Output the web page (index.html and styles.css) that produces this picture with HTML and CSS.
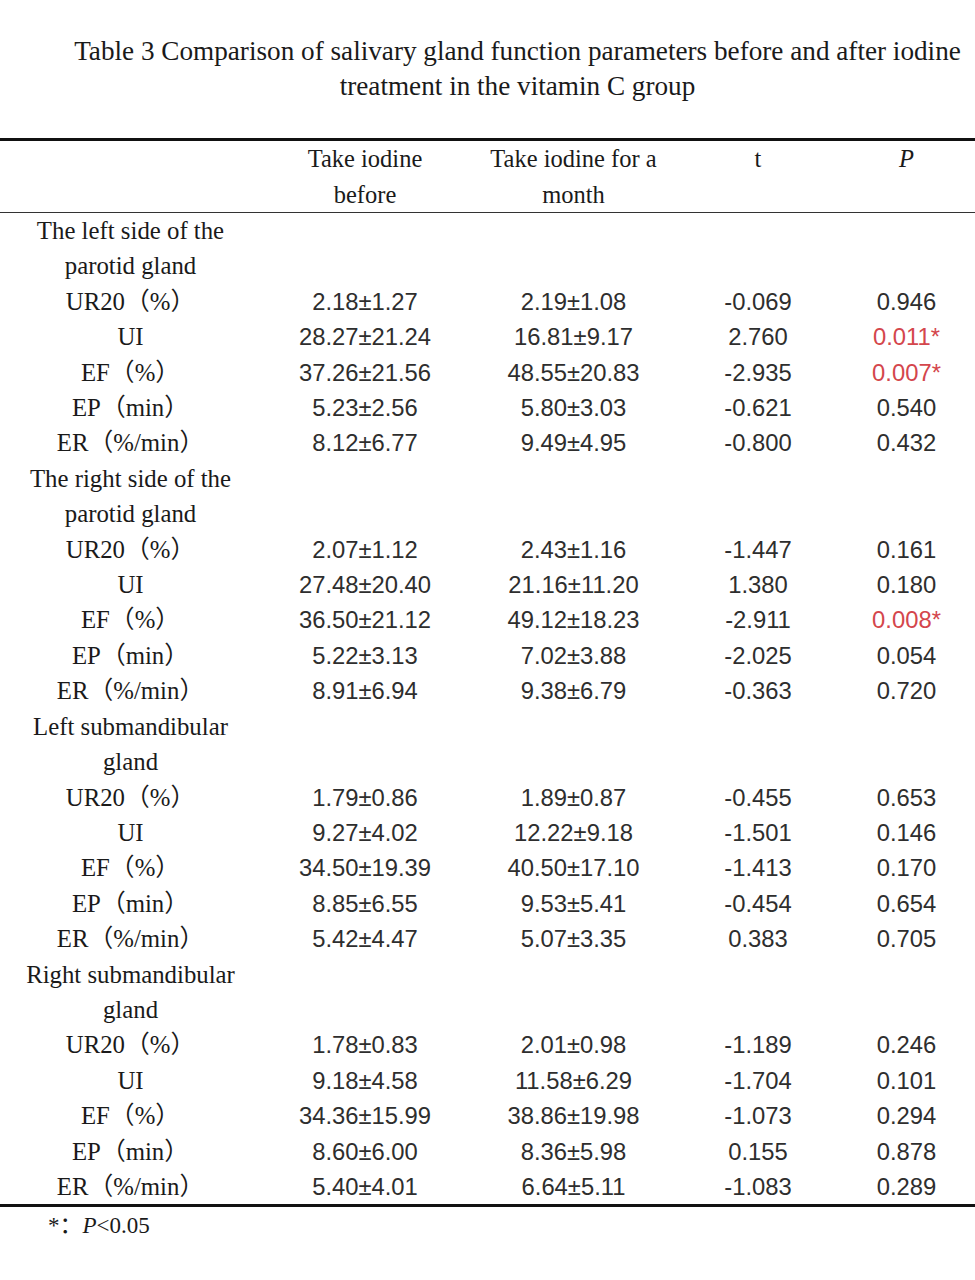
FILE: index.html
```html
<!DOCTYPE html>
<html lang="en">
<head>
<meta charset="utf-8">
<title>Table 3</title>
<link rel="stylesheet" href="styles.css">
</head>
<body>
<div class="page">
  <h1 class="title">Table 3 Comparison of salivary gland function parameters before and after iodine treatment in the vitamin C group</h1>
  <table class="data">
    <colgroup>
      <col class="c1"><col class="c2"><col class="c3"><col class="c4"><col class="c5">
    </colgroup>
    <thead>
      <tr>
        <th></th>
        <th class="h-wrap">Take iodine before</th>
        <th class="h-wide">Take iodine for a month</th>
        <th class="h-plain">t</th>
        <th class="h-plain"><i>P</i></th>
      </tr>
    </thead>
    <tbody>
      <tr class="group"><td>The left side of the parotid gland</td><td></td><td></td><td></td><td></td></tr>
      <tr><td>UR20（%）</td><td class="n">2.18±1.27</td><td class="n">2.19±1.08</td><td class="n">-0.069</td><td class="n">0.946</td></tr>
      <tr><td>UI</td><td class="n">28.27±21.24</td><td class="n">16.81±9.17</td><td class="n">2.760</td><td class="n sig">0.011*</td></tr>
      <tr><td>EF（%）</td><td class="n">37.26±21.56</td><td class="n">48.55±20.83</td><td class="n">-2.935</td><td class="n sig">0.007*</td></tr>
      <tr><td>EP（min）</td><td class="n">5.23±2.56</td><td class="n">5.80±3.03</td><td class="n">-0.621</td><td class="n">0.540</td></tr>
      <tr><td>ER（%/min）</td><td class="n">8.12±6.77</td><td class="n">9.49±4.95</td><td class="n">-0.800</td><td class="n">0.432</td></tr>

      <tr class="group"><td>The right side of the parotid gland</td><td></td><td></td><td></td><td></td></tr>
      <tr><td>UR20（%）</td><td class="n">2.07±1.12</td><td class="n">2.43±1.16</td><td class="n">-1.447</td><td class="n">0.161</td></tr>
      <tr><td>UI</td><td class="n">27.48±20.40</td><td class="n">21.16±11.20</td><td class="n">1.380</td><td class="n">0.180</td></tr>
      <tr><td>EF（%）</td><td class="n">36.50±21.12</td><td class="n">49.12±18.23</td><td class="n">-2.911</td><td class="n sig">0.008*</td></tr>
      <tr><td>EP（min）</td><td class="n">5.22±3.13</td><td class="n">7.02±3.88</td><td class="n">-2.025</td><td class="n">0.054</td></tr>
      <tr><td>ER（%/min）</td><td class="n">8.91±6.94</td><td class="n">9.38±6.79</td><td class="n">-0.363</td><td class="n">0.720</td></tr>

      <tr class="group"><td>Left submandibular gland</td><td></td><td></td><td></td><td></td></tr>
      <tr><td>UR20（%）</td><td class="n">1.79±0.86</td><td class="n">1.89±0.87</td><td class="n">-0.455</td><td class="n">0.653</td></tr>
      <tr><td>UI</td><td class="n">9.27±4.02</td><td class="n">12.22±9.18</td><td class="n">-1.501</td><td class="n">0.146</td></tr>
      <tr><td>EF（%）</td><td class="n">34.50±19.39</td><td class="n">40.50±17.10</td><td class="n">-1.413</td><td class="n">0.170</td></tr>
      <tr><td>EP（min）</td><td class="n">8.85±6.55</td><td class="n">9.53±5.41</td><td class="n">-0.454</td><td class="n">0.654</td></tr>
      <tr><td>ER（%/min）</td><td class="n">5.42±4.47</td><td class="n">5.07±3.35</td><td class="n">0.383</td><td class="n">0.705</td></tr>

      <tr class="group"><td>Right submandibular gland</td><td></td><td></td><td></td><td></td></tr>
      <tr><td>UR20（%）</td><td class="n">1.78±0.83</td><td class="n">2.01±0.98</td><td class="n">-1.189</td><td class="n">0.246</td></tr>
      <tr><td>UI</td><td class="n">9.18±4.58</td><td class="n">11.58±6.29</td><td class="n">-1.704</td><td class="n">0.101</td></tr>
      <tr><td>EF（%）</td><td class="n">34.36±15.99</td><td class="n">38.86±19.98</td><td class="n">-1.073</td><td class="n">0.294</td></tr>
      <tr><td>EP（min）</td><td class="n">8.60±6.00</td><td class="n">8.36±5.98</td><td class="n">0.155</td><td class="n">0.878</td></tr>
      <tr><td>ER（%/min）</td><td class="n">5.40±4.01</td><td class="n">6.64±5.11</td><td class="n">-1.083</td><td class="n">0.289</td></tr>
    </tbody>
  </table>
  <p class="note">*：<i>P</i>&lt;0.05</p>
</div>
</body>
</html>
```

FILE: styles.css
```css
html, body {
  margin: 0;
  padding: 0;
  background: #ffffff;
}

.page {
  width: 975px;
  padding-top: 34px;
  font-family: "Liberation Serif", "Noto Sans CJK SC", serif;
  color: #1a1a1a;
}

.title {
  margin: 0 0 34px 0;
  padding: 0 0 0 60px;
  font-weight: normal;
  font-size: 27.2px;
  line-height: 35px;
  text-align: center;
  color: #1a1a1a;
}

.data {
  width: 975px;
  border-collapse: collapse;
  table-layout: fixed;
  border-top: 3px solid #111;
  border-bottom: 3px solid #111;
}

.c1 { width: 261px; }
.c2 { width: 208px; }
.c3 { width: 209px; }
.c4 { width: 160px; }
.c5 { width: 137px; }

.data thead th {
  font-weight: normal;
  font-size: 24.5px;
  line-height: 35.5px;
  padding: 0;
  text-align: center;
  vertical-align: top;
  border-bottom: 1.5px solid #333;
}

.data thead .h-wrap {
  padding: 0 30px;
}

.data thead .h-wide {
  padding: 0 12px;
}

.data tbody td {
  font-size: 24.8px;
  line-height: 35.4px;
  padding: 0;
  text-align: center;
  vertical-align: middle;
}

.data tbody td:first-child {
  padding: 0 20px;
}

.data tbody .n {
  font-family: "Liberation Sans", "Noto Sans", sans-serif;
  font-size: 23.8px;
  color: #2e2e2e;
}

.data tbody .sig {
  color: #d4464c;
}

.note {
  margin: 4px 0 0 48px;
  font-size: 23px;
  line-height: 30px;
}
```
